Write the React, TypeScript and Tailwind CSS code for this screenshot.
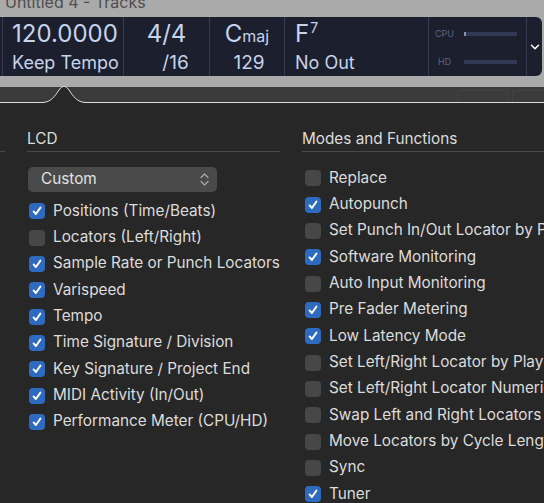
import React from "react";
import { ChevronDown } from "lucide-react";

const leftItems: [string, boolean][] = [
  ["Positions (Time/Beats)", true],
  ["Locators (Left/Right)", false],
  ["Sample Rate or Punch Locators", true],
  ["Varispeed", true],
  ["Tempo", true],
  ["Time Signature / Division", true],
  ["Key Signature / Project End", true],
  ["MIDI Activity (In/Out)", true],
  ["Performance Meter (CPU/HD)", true],
];

const rightItems: [string, boolean][] = [
  ["Replace", false],
  ["Autopunch", true],
  ["Set Punch In/Out Locator by Playhead", false],
  ["Software Monitoring", true],
  ["Auto Input Monitoring", false],
  ["Pre Fader Metering", true],
  ["Low Latency Mode", true],
  ["Set Left/Right Locator by Playhead Position", false],
  ["Set Left/Right Locator Numerically", false],
  ["Swap Left and Right Locators", false],
  ["Move Locators by Cycle Length", false],
  ["Sync", false],
  ["Tuner", true],
];

function Box({ checked }: { checked: boolean }) {
  return checked ? (
    <span className="w-[16px] h-[16px] rounded-[4px] bg-[#2e6bc0] flex items-center justify-center shrink-0">
      <svg width="12" height="12" viewBox="0 0 12 12">
        <path d="M2.6 6.4 L4.9 9 L9.4 2.6" fill="none" stroke="#ffffff" strokeWidth="1.9" strokeLinecap="round" strokeLinejoin="round" />
      </svg>
    </span>
  ) : (
    <span className="w-[16px] h-[16px] rounded-[4px] bg-[#474747] shrink-0" />
  );
}

function Row({ label, checked, inset }: { label: string; checked: boolean; inset: string }) {
  return (
    <div className={`h-[26.35px] flex items-center whitespace-nowrap ${inset}`}>
      <Box checked={checked} />
      <span className="ml-[8px] text-[15.3px] text-[#dcdcdc]">{label}</span>
    </div>
  );
}

export default function App() {
  return (
    <div
      className="w-[544px] h-[503px] overflow-hidden relative bg-[#272727] flex flex-col"
      style={{ fontFamily: "Inter, 'Liberation Sans', sans-serif" }}
    >
      {/* top window area */}
      <div className="bg-[#aaaaaa] shrink-0">
        <div className="h-[17px] overflow-hidden">
          <div className="-mt-[8px] pl-[5px] text-[16px] leading-[20px] text-[#4e4e4e] whitespace-nowrap">
            Untitled 4 - Tracks
          </div>
        </div>
        <div className="h-[59px] w-[542px] bg-[#1c1f2d] rounded-r-[6px] flex text-[#c6d3ec]">
          <div className="w-[2px]" />
          <div className="w-[121px] border-l border-[#373c52] flex flex-col pt-[3px] pl-[9px]">
            <div className="h-[28px] leading-[28px] text-[24px]">120.0000</div>
            <div className="mt-[3px] h-[24px] leading-[24px] text-[18px]">Keep Tempo</div>
          </div>
          <div className="w-[86px] border-l border-[#373c52] flex flex-col pt-[3px] items-center">
            <div className="h-[28px] leading-[28px] text-[24px]">4/4</div>
            <div className="mt-[3px] h-[24px] leading-[24px] text-[19px] pl-[18px]">/16</div>
          </div>
          <div className="w-[75px] border-l border-[#373c52] flex flex-col pt-[3px] items-center">
            <div className="h-[28px] leading-[28px] text-[24px] whitespace-nowrap">
              C<span className="text-[16px]">maj</span>
            </div>
            <div className="mt-[3px] h-[24px] leading-[24px] text-[19px] pl-[4px]">129</div>
          </div>
          <div className="w-[144px] border-l border-[#373c52] flex flex-col pt-[3px] pl-[10px]">
            <div className="h-[28px] leading-[28px] text-[24px] whitespace-nowrap">
              F<span className="text-[14px] relative -top-[9px] ml-[1px]">7</span>
            </div>
            <div className="mt-[3px] h-[24px] leading-[24px] text-[18px]">No Out</div>
          </div>
          <div className="w-[98px] border-l border-[#373c52] flex flex-col pl-[6px] pr-[9px]">
            <div className="h-[32px] flex items-center gap-[9px] pt-[1px]">
              <span className="text-[9px] text-[#5d6483] w-[20px]">CPU</span>
              <div className="flex-1 h-[4px] bg-[#323954] flex">
                <div className="w-[2px] bg-[#8a92b0]" />
              </div>
            </div>
            <div className="h-[27px] flex items-center gap-[9px] pb-[2px]">
              <span className="text-[9px] text-[#5d6483] w-[20px] pl-[3px]">HD</span>
              <div className="flex-1 h-[4px] bg-[#323954]" />
            </div>
          </div>
          <div className="flex-1 border-l border-[#373c52] flex items-center justify-center">
            <ChevronDown size={14} strokeWidth={2.6} color="#ffffff" />
          </div>
        </div>
        <div className="h-[11px]" />
      </div>

      {/* toolbar band */}
      <div className="h-[15px] bg-[#3b3b3b] shrink-0 flex justify-end items-end">
        <div className="w-[51px] h-[12px] border-t border-l border-r border-[#444444] rounded-t-[3px] mr-[4px]" />
        <div className="w-[32px] h-[12px] border-t border-l border-[#444444] rounded-tl-[3px]" />
      </div>

      {/* popover */}
      <div className="flex-1 border-t border-[#dcdcdc] bg-[#272727] pt-[26px]">
        <div className="flex gap-[22px]">
          <div className="w-[5px] h-[23px] border-b border-[#4a4a4a] shrink-0" />
          <div className="w-[253px] shrink-0 flex flex-col">
            <div className="h-[23px] border-b border-[#4a4a4a] text-[15.3px] leading-[20px] text-[#dcdcdc]">LCD</div>
            <div className="mt-[15px] h-[25px] w-[189px] ml-[1px] rounded-[5px] bg-[#4a4a4a] flex items-center justify-between pl-[13px] pr-[8px]">
              <span className="text-[15.3px] text-[#e2e2e2]">Custom</span>
              <svg width="9" height="15" viewBox="0 0 9 15">
                <path d="M1 5.5 L4.5 2 L8 5.5 M1 9.5 L4.5 13 L8 9.5" fill="none" stroke="#a8a8a8" strokeWidth="1.2" strokeLinecap="round" strokeLinejoin="round" />
              </svg>
            </div>
            <div className="mt-[6px] flex flex-col">
              {leftItems.map(([l, c]) => (
                <Row key={l} label={l} checked={c} inset="pl-[2px]" />
              ))}
            </div>
          </div>
          <div className="flex-1 min-w-0 flex flex-col">
            <div className="h-[23px] border-b border-[#4a4a4a] text-[15.3px] leading-[20px] text-[#dcdcdc] whitespace-nowrap">
              Modes and Functions
            </div>
            <div className="mt-[13px] flex flex-col">
              {rightItems.map(([l, c]) => (
                <Row key={l} label={l} checked={c} inset="pl-[3px]" />
              ))}
            </div>
          </div>
        </div>
      </div>

      {/* popover arrow */}
      <svg className="absolute left-[42px] top-[82px]" width="44" height="22" viewBox="0 0 44 22">
        <path d="M0 20.5 C9 20.5 13 14 17 8 Q22 0.5 27 8 C31 14 35 20.5 44 20.5 L44 22 L0 22 Z" fill="#272727" />
        <path d="M0 20.5 C9 20.5 13 14 17 8 Q22 0.5 27 8 C31 14 35 20.5 44 20.5" fill="none" stroke="#dcdcdc" strokeWidth="1" />
      </svg>
    </div>
  );
}
